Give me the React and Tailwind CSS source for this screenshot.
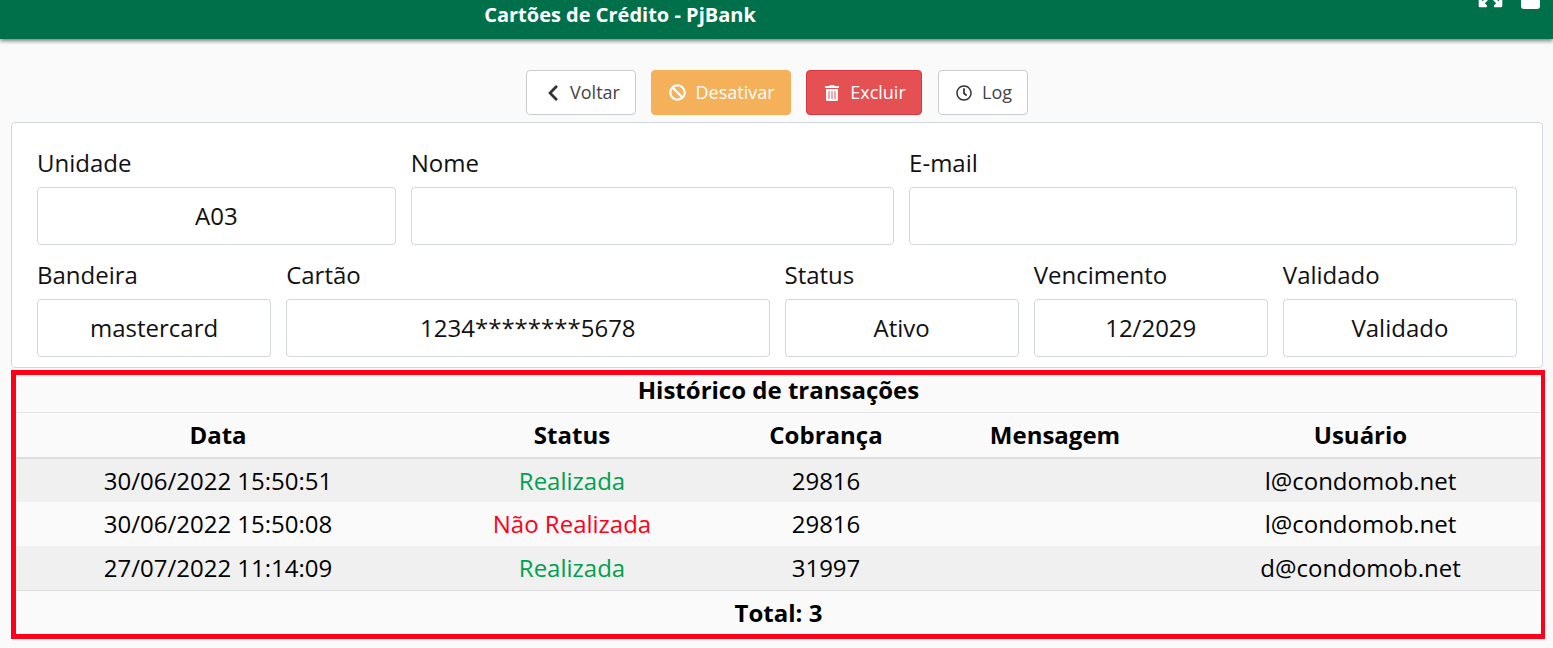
import { FaChevronLeft, FaBan, FaTrashAlt, FaRegClock, FaExpandArrowsAlt } from "react-icons/fa";

const font = { fontFamily: '"Open Sans", sans-serif' };

const transacoes = [
  { data: "30/06/2022 15:50:51", status: "Realizada", cobranca: "29816", usuario: "l@condomob.net" },
  { data: "30/06/2022 15:50:08", status: "Não Realizada", cobranca: "29816", usuario: "l@condomob.net" },
  { data: "27/07/2022 11:14:09", status: "Realizada", cobranca: "31997", usuario: "d@condomob.net" },
];

function Campo({ label, value, span }) {
  return (
    <div className={span}>
      <div className="h-[30px] pb-[2px] text-[24px] leading-[28px] text-[#111]">{label}</div>
      <div className="mt-[8px] flex h-[58px] items-center justify-center rounded border border-[#d2d6de] bg-white text-[24px] text-[#111]">
        {value}
      </div>
    </div>
  );
}

function Botao({ className, children }) {
  return (
    <button className={`flex h-[45px] items-center justify-center rounded border pl-[3px] text-[18px] ${className}`}>
      {children}
    </button>
  );
}

export default function App() {
  return (
    <div className="h-[648px] overflow-hidden bg-[#fafafa]" style={font}>
      {/* Barra superior */}
      <div className="flex h-[39px] overflow-hidden bg-[#00704a] shadow-[0_2px_4px_rgba(0,0,0,0.5)]">
        <div className="flex w-[1240px] justify-center">
          <span className="text-[20px] leading-[30px] font-bold text-white">Cartões de Crédito - PjBank</span>
        </div>
        <div className="ml-[237px] flex h-[9px] items-end gap-[17px] overflow-hidden">
          <FaExpandArrowsAlt className="shrink-0 text-white" size={27} />
          <div className="h-[9px] w-[19px] shrink-0 rounded-b-[3px] bg-white" />
        </div>
      </div>

      {/* Ações */}
      <div className="mt-[31px] flex justify-center gap-[15px]">
        <Botao className="w-[110px] gap-[8px] border-[#ccc] bg-white text-[#333]">
          <FaChevronLeft size={18} />
          <span className="text-[#444]">Voltar</span>
        </Botao>
        <Botao className="w-[140px] gap-[9px] border-[#f5b05a] bg-[#f5b05a] text-white">
          <FaBan size={17} />
          Desativar
        </Botao>
        <Botao className="w-[116px] gap-[10px] border-[#d9363e] bg-[#e55053] text-white">
          <FaTrashAlt size={16} />
          Excluir
        </Botao>
        <Botao className="ml-px w-[90px] gap-[10px] border-[#ccc] bg-white text-[#333]">
          <FaRegClock size={16} />
          <span className="text-[#444]">Log</span>
        </Botao>
      </div>

      {/* Formulário */}
      <div className="mx-[11px] mt-[7px] h-[246px] w-[1532px] rounded border border-[#d2d6de] bg-white px-[25px] pt-[26px]">
        <div className="grid grid-cols-12 gap-x-[15px] gap-y-[16px]">
          <Campo span="col-span-3" label="Unidade" value="A03" />
          <Campo span="col-span-4" label="Nome" value="" />
          <Campo span="col-span-5" label="E-mail" value="" />
          <Campo span="col-span-2" label="Bandeira" value="mastercard" />
          <Campo span="col-span-4" label="Cartão" value="1234********5678" />
          <Campo span="col-span-2" label="Status" value="Ativo" />
          <Campo span="col-span-2" label="Vencimento" value="12/2029" />
          <Campo span="col-span-2" label="Validado" value="Validado" />
        </div>
      </div>

      {/* Histórico */}
      <div className="mt-[2px] ml-[11px] w-[1534px] border-[5px] border-r-[4px] border-[#ff0019] text-[24px] text-black">
        <table className="w-full table-fixed border-collapse bg-[#fafafa] text-center">
          <colgroup>
            <col className="w-[404px]" />
            <col className="w-[304px]" />
            <col className="w-[204px]" />
            <col className="w-[254px]" />
            <col />
          </colgroup>
          <thead>
            <tr className="h-[37px] border-b border-[#e4e4e4]">
              <th colSpan={5} className="pb-[6px] leading-[30px] font-bold">Histórico de transações</th>
            </tr>
            <tr className="h-[46px] border-b-2 border-[#ddd]">
              <th className="font-bold">Data</th>
              <th className="font-bold">Status</th>
              <th className="font-bold">Cobrança</th>
              <th className="font-bold">Mensagem</th>
              <th className="pr-[2px] font-bold">Usuário</th>
            </tr>
          </thead>
          <tbody>
            {transacoes.map((t, i) => (
              <tr key={i} className={i % 2 === 0 ? "h-[44px] bg-[#f0f0f0]" : "h-[44px]"}>
                <td>{t.data}</td>
                <td className={t.status === "Realizada" ? "text-[#00a04f]" : "text-[#ff0019]"}>{t.status}</td>
                <td>{t.cobranca}</td>
                <td></td>
                <td className="pr-[2px]">{t.usuario}</td>
              </tr>
            ))}
          </tbody>
          <tfoot>
            <tr className="h-[44px] border-t border-[#ddd]">
              <td colSpan={5} className="pt-[2px] font-bold">Total: 3</td>
            </tr>
          </tfoot>
        </table>
      </div>
    </div>
  );
}
